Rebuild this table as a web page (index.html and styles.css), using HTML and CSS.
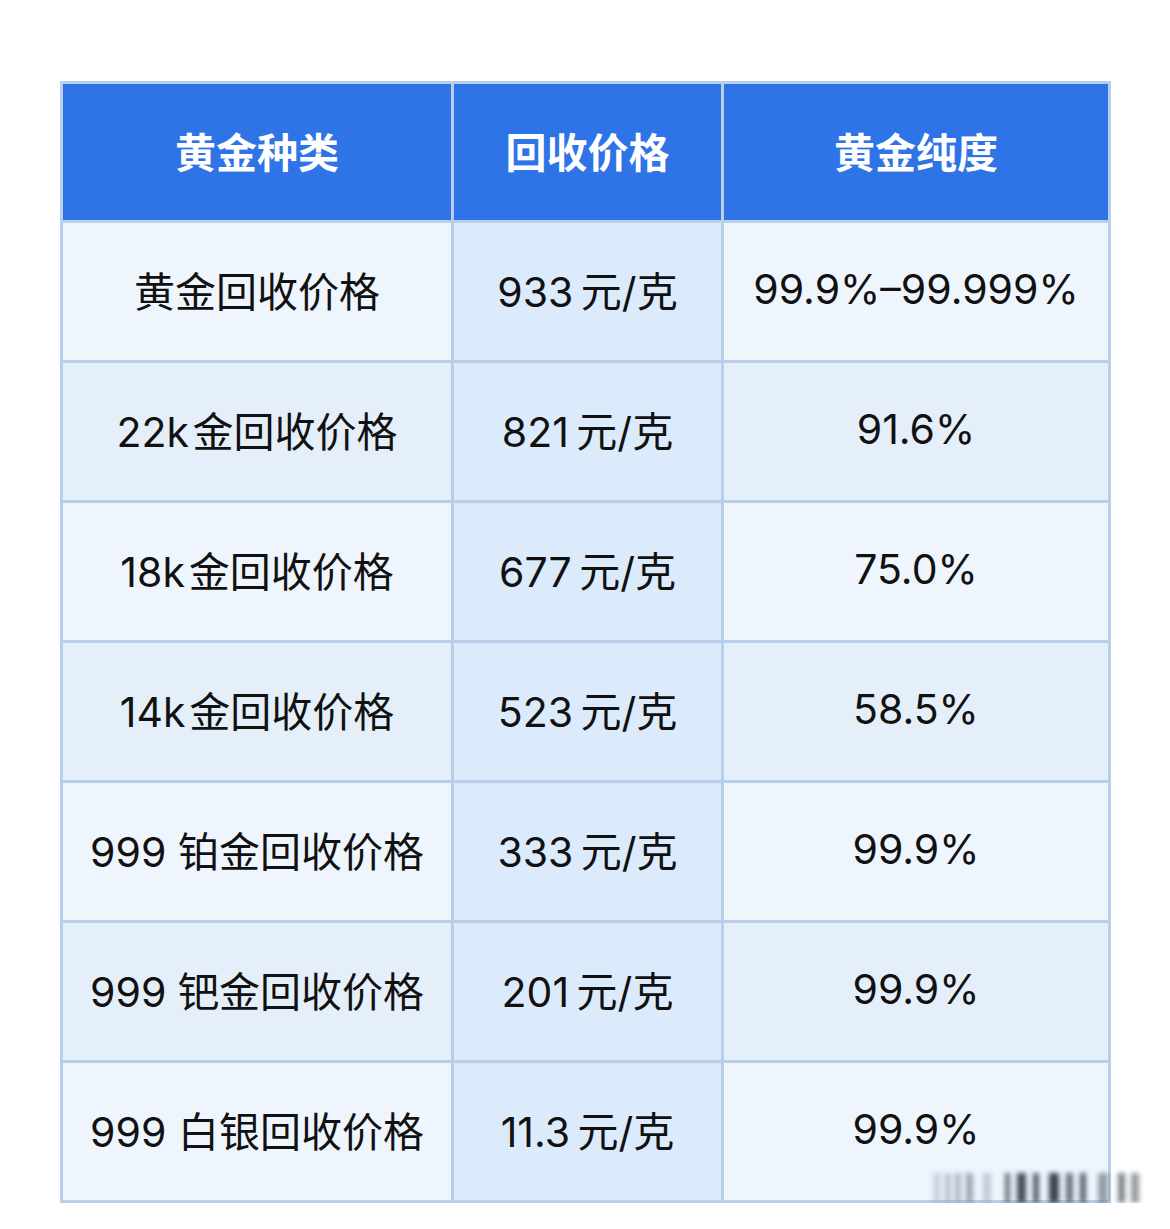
FILE: index.html
```html
<!DOCTYPE html>
<html lang="zh">
<head>
<meta charset="utf-8">
<title>黄金回收价格</title>
<link rel="stylesheet" href="styles.css">
</head>
<body>
<div class="page">
  <table class="price-table">
    <thead>
      <tr>
        <th class="c1">黄金种类</th>
        <th class="c2">回收价格</th>
        <th class="c3">黄金纯度</th>
      </tr>
    </thead>
    <tbody>
      <tr class="odd"><td class="c1">黄金回收价格</td><td class="c2">933&#8201;元/克</td><td class="c3">99.9%–99.999%</td></tr>
      <tr class="even"><td class="c1">22k&#8202;金回收价格</td><td class="c2">821&#8201;元/克</td><td class="c3">91.6%</td></tr>
      <tr class="odd"><td class="c1">18k&#8202;金回收价格</td><td class="c2">677&#8201;元/克</td><td class="c3">75.0%</td></tr>
      <tr class="even"><td class="c1">14k&#8202;金回收价格</td><td class="c2">523&#8201;元/克</td><td class="c3">58.5%</td></tr>
      <tr class="odd"><td class="c1">999 铂金回收价格</td><td class="c2">333&#8201;元/克</td><td class="c3">99.9%</td></tr>
      <tr class="even"><td class="c1">999 钯金回收价格</td><td class="c2">201&#8201;元/克</td><td class="c3">99.9%</td></tr>
      <tr class="odd last"><td class="c1">999 白银回收价格</td><td class="c2">11.3&#8201;元/克</td><td class="c3 mark-cell">99.9%<span class="watermark" aria-hidden="true"></span></td></tr>
    </tbody>
  </table>
</div>
</body>
</html>
```

FILE: styles.css
```css
html, body {
  margin: 0;
  padding: 0;
  background: #ffffff;
}

.page {
  padding: 81px 0 0 60px;
}

.price-table {
  border-collapse: separate;
  border-spacing: 3px;
  background: #b7cfea;
  font-family: Inter, "Noto Sans CJK SC", sans-serif;
  font-size: 41px;
  font-weight: 370;
  color: #111111;
  table-layout: fixed;
  width: 1051px;
}

.price-table th,
.price-table td {
  padding: 0 0 5px 0;
  text-align: center;
  vertical-align: middle;
  white-space: nowrap;
}

.price-table th {
  height: 131px;
  background: #2f74e6;
  color: #ffffff;
  font-family: "Noto Sans CJK SC", sans-serif;
  font-weight: 700;
  font-size: 41px;
}

.price-table td {
  height: 132px;
}

.c1 { width: 388px; }
.c2 { width: 267px; }
.c3 { width: 384px; }

tr.odd td { background: #eef5fd; }
tr.even td { background: #e5effa; }
tr td.c2 { background: #dcebfc; }

.mark-cell {
  position: relative;
}

.watermark {
  position: absolute;
  right: -37px;
  bottom: -3px;
  width: 212px;
  height: 30px;
  background:
    linear-gradient(90deg,
      rgba(140, 150, 170, 0.35) 0 8px, transparent 8px 12px,
      rgba(120, 130, 150, 0.45) 12px 18px, transparent 18px 22px,
      rgba(110, 120, 140, 0.5) 22px 28px, transparent 28px 33px,
      rgba(90, 100, 120, 0.55) 33px 40px, transparent 40px 50px,
      rgba(140, 150, 165, 0.45) 50px 58px, transparent 58px 72px,
      rgba(60, 66, 80, 0.75) 72px 77px, transparent 77px 84px,
      rgba(40, 46, 60, 0.85) 84px 93px, transparent 93px 100px,
      rgba(50, 56, 70, 0.8) 100px 106px, transparent 106px 116px,
      rgba(40, 46, 60, 0.9) 116px 126px, transparent 126px 133px,
      rgba(60, 66, 80, 0.75) 133px 140px, transparent 140px 147px,
      rgba(50, 56, 70, 0.8) 147px 153px, transparent 153px 165px,
      rgba(90, 96, 110, 0.6) 165px 175px, transparent 175px 185px,
      rgba(70, 76, 90, 0.7) 185px 192px, transparent 192px 198px,
      rgba(80, 86, 100, 0.6) 198px 206px, transparent 206px);
  filter: blur(2.5px);
}
```
